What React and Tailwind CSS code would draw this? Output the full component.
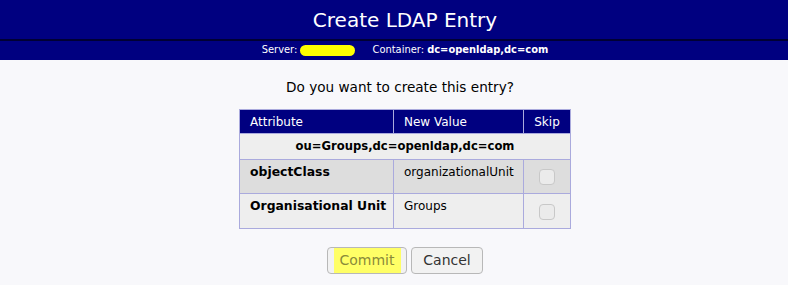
import React from 'react';

const rows = [
  { attr: 'objectClass', value: 'organizationalUnit', bg: 'bg-[#dddddd]', h: 'h-[34px]' },
  { attr: 'Organisational Unit', value: 'Groups', bg: 'bg-[#eeeeee]', h: 'h-[35px]' },
];

const App = () => {
  return (
    <div className="w-[788px] h-[285px] bg-[#f8f8fb] overflow-hidden" style={{ fontFamily: '"DejaVu Sans", sans-serif' }}>
      <div className="bg-[#000080] border-b-2 border-[#000033] h-[41px] pl-[22px] flex items-center justify-center">
        <h1 className="text-white text-[20px] leading-none">Create LDAP Entry</h1>
      </div>
      <div
        className="bg-[#000080] h-[19px] pl-[22px] flex items-center justify-center gap-[17px] text-white text-[11px]"
        style={{ fontFamily: '"DejaVu Sans Condensed", "DejaVu Sans", sans-serif', fontStretch: 'condensed' }}
      >
        <span className="flex items-center">
          Server:&nbsp;
          <span className="inline-block w-[55px] h-[11px] rounded-full bg-[#ffff00]"></span>
        </span>
        <span>
          Container: <b>dc=openldap,dc=com</b>
        </span>
      </div>

      <div className="pl-[22px] flex flex-col items-center">
        <p className="mt-[17px] mr-[10px] text-[13.6px] text-black">Do you want to create this entry?</p>

        <table className="mt-[12px] w-[332px] border-collapse border border-[#aaaadd] text-[12px] whitespace-nowrap">
          <thead>
            <tr className="bg-[#000080] text-white h-[24px]">
              <th className="font-normal text-left pl-[10px] w-[154px] border border-[#aaaadd]">Attribute</th>
              <th className="font-normal text-left pl-[10px] w-[130px] border border-[#aaaadd]">New Value</th>
              <th className="font-normal text-center border border-[#aaaadd]">Skip</th>
            </tr>
          </thead>
          <tbody>
            <tr className="bg-[#eeeeee] h-[26px]">
              <td colSpan={3} className="text-center text-[11.6px] font-bold border border-[#aaaadd]">
                ou=Groups,dc=openldap,dc=com
              </td>
            </tr>
            {rows.map((r) => (
              <tr key={r.attr} className={`${r.bg} ${r.h}`}>
                <td className="align-top pl-[10px] pt-[3px] text-[12.4px] font-bold border border-[#aaaadd]">{r.attr}</td>
                <td className="align-top pl-[10px] pt-[3px] border border-[#aaaadd]">{r.value}</td>
                <td className="text-center align-middle border border-[#aaaadd]">
                  <span className="inline-block w-[16px] h-[16px] mt-[6px] rounded-[4px] border border-[#c8c8c8] bg-[#ebebeb]"></span>
                </td>
              </tr>
            ))}
          </tbody>
        </table>

        <div className="mt-[18px] flex gap-[4px]">
          <button className="w-[80px] h-[27px] rounded-[4px] border border-[#b8b8b8] bg-[#f2f2f2] text-[14px] text-[#8a8a3a] flex items-center justify-center">
            <span className="bg-[#ffff66] px-[6px] py-[2px]">Commit</span>
          </button>
          <button className="w-[72px] h-[27px] rounded-[4px] border border-[#b8b8b8] bg-[#f2f2f2] text-[14px] text-[#333333]">
            Cancel
          </button>
        </div>
      </div>
    </div>
  );
};

export default App;
